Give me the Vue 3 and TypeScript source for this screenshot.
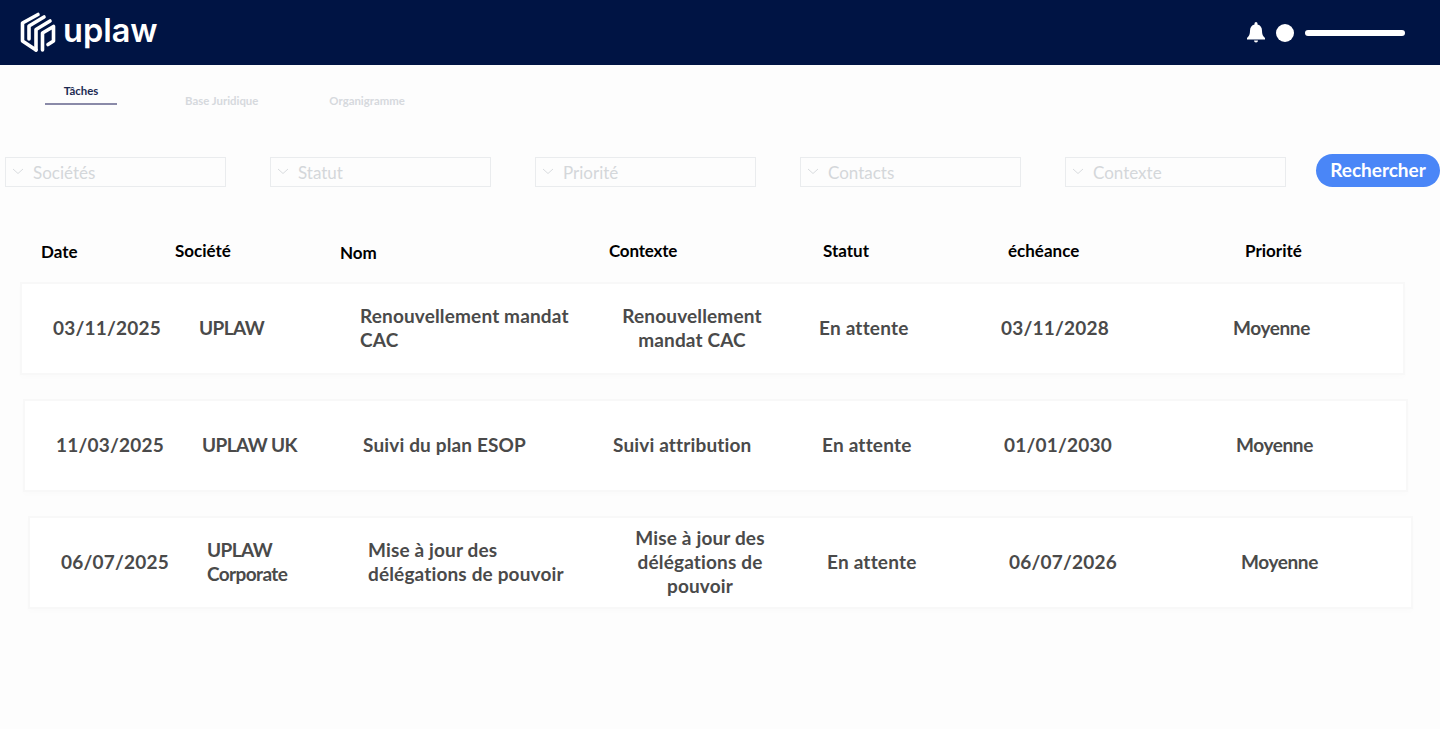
<script setup lang="ts">
interface Row {
  date: string
  company: string
  name: string
  context: string
  due: string
  rowClass: string
}

const tabs = [
  { label: 'Tâches', cls: 'tab-active' },
  { label: 'Base Juridique', cls: 'tab-legal' },
  { label: 'Organigramme', cls: 'tab-org' },
]

const filters = ['Sociétés', 'Statut', 'Priorité', 'Contacts', 'Contexte']

const headers = [
  { label: 'Date', cls: 'h-date' },
  { label: 'Société', cls: 'h-company' },
  { label: 'Nom', cls: 'h-name' },
  { label: 'Contexte', cls: 'h-context' },
  { label: 'Statut', cls: 'h-status' },
  { label: 'échéance', cls: 'h-due' },
  { label: 'Priorité', cls: 'h-priority' },
]

const rows: Row[] = [
  { date: '03/11/2025', company: 'UPLAW', name: 'Renouvellement mandat CAC', context: 'Renouvellement mandat CAC', due: '03/11/2028', rowClass: 'row-a' },
  { date: '11/03/2025', company: 'UPLAW UK', name: 'Suivi du plan ESOP', context: 'Suivi attribution', due: '01/01/2030', rowClass: 'row-b' },
  { date: '06/07/2025', company: 'UPLAW Corporate', name: 'Mise à jour des délégations de pouvoir', context: 'Mise à jour des délégations de pouvoir', due: '06/07/2026', rowClass: 'row-c' },
]
</script>

<template>
  <div class="page">
    <header class="topbar">
      <div class="brand">
        <svg class="mark" viewBox="0 0 36 41" width="36" height="41" fill="none" stroke="#fff" stroke-width="3.6" stroke-linejoin="round" stroke-linecap="round">
          <path d="M18 2.500 L2.500 11 V29 L16 38" />
          <path d="M24 5 L9 14 V27" />
          <path d="M30 9 L16 17.500 V38" />
          <path d="M22.500 38 V21 L33.500 14.500 V29 L28 32.500" />
        </svg>
        <span class="wordmark">uplaw</span>
      </div>
      <div class="account">
        <svg class="bell" viewBox="0 0 18 21" width="18" height="21" fill="#fff">
          <path d="M9 0a1.500 1.500 0 0 1 1.500 1.500v1c3 .7 4.500 3.200 4.500 6.200 0 3.400.8 5.300 3 7.300v1.500H0V16c2.200-2 3-3.900 3-7.300 0-3 1.500-5.500 4.500-6.200v-1A1.500 1.500 0 0 1 9 0z" />
          <path d="M7 18.500h4a2 2 0 0 1-4 0z" />
        </svg>
        <span class="avatar"></span>
        <span class="user-bar"></span>
      </div>
    </header>

    <nav class="tabs">
      <span v-for="t in tabs" :key="t.label" class="tab" :class="t.cls">{{ t.label }}</span>
    </nav>

    <section class="filters">
      <div v-for="f in filters" :key="f" class="select">
        <svg class="chev" viewBox="0 0 12 7" width="12" height="7" fill="none" stroke="#d9dcdf" stroke-width="1">
          <path d="M1 1l5 4.500L11 1" />
        </svg>
        <span>{{ f }}</span>
      </div>
      <button class="search" type="button">Rechercher</button>
    </section>

    <div class="thead">
      <span v-for="h in headers" :key="h.label" :class="h.cls">{{ h.label }}</span>
    </div>

    <div class="rows">
      <article v-for="r in rows" :key="r.date" class="row" :class="r.rowClass">
        <span class="num">{{ r.date }}</span>
        <span class="company">{{ r.company }}</span>
        <span class="name">{{ r.name }}</span>
        <span class="context">{{ r.context }}</span>
        <span class="status">En attente</span>
        <span class="num">{{ r.due }}</span>
        <span class="priority">Moyenne</span>
      </article>
    </div>
  </div>
</template>

<style scoped>
.page {
  width: 1440px;
  height: 729px;
  overflow: hidden;
  background: #fdfdfd;
  font-family: "Lato", "Noto Sans", sans-serif;
}
.topbar {
  height: 65px;
  background: #001444;
  display: flex;
  align-items: center;
  justify-content: space-between;
  padding: 0 35px 0 20px;
  box-sizing: border-box;
}
.brand { display: flex; align-items: center; gap: 7px; }
.wordmark {
  font-family: "Inter", sans-serif;
  font-size: 32.5px;
  font-weight: 600;
  line-height: 40px;
  color: #fff;
  margin-top: -3px;
}
.account { display: flex; align-items: center; }
.bell { margin-right: 11px; margin-top: -1px; }
.avatar { width: 18px; height: 18px; border-radius: 50%; background: #fff; margin-right: 11px; }
.user-bar { width: 100px; height: 6px; border-radius: 3px; background: #fff; }

.tabs { display: flex; height: 75px; padding-left: 45px; }
.tab { font-size: 11.4px; font-weight: 700; color: #d6d9dd; line-height: 14px; }
.tab-active {
  width: 72px;
  height: 19px;
  margin-top: 19px;
  text-align: center;
  color: #1c2a52;
  border-bottom: 2px solid #8a8aa8;
}
.tab-legal { margin: 29px 0 0 68px; }
.tab-org { margin: 29px 0 0 71px; }

.filters { height: 33px; padding-left: 5px; display: flex; gap: 44px; margin-top: 14px; }
.select {
  width: 221px;
  height: 30px;
  margin-top: 3px;
  box-sizing: border-box;
  border: 1px solid #eaecee;
  display: flex;
  align-items: center;
  padding-left: 6px;
  gap: 9px;
  font-size: 17px;
  color: #d4d7da;
}
.chev { margin-top: -2px; }
.search {
  width: 124px;
  height: 33px;
  margin-left: -14px;
  border: 0;
  border-radius: 17px;
  background: #4a86f7;
  color: #fff;
  font: 700 19px "Lato", sans-serif;
  padding: 0 0 2px;
}

.thead {
  height: 95px;
  display: grid;
  grid-template-columns: 134px 165px 269px 214px 185px 237px 1fr;
  padding-left: 41px;
  font-size: 17px;
  font-weight: 700;
  color: #000;
}
.thead span { margin-top: 53px; line-height: 22px; }
.thead .h-date { margin-top: 54px; }
.thead .h-name { margin-top: 55px; }
.thead .h-context { letter-spacing: -0.2px; }

.rows { display: flex; flex-direction: column; gap: 24px; }
.row {
  width: 1385px;
  height: 93px;
  box-sizing: border-box;
  background: #fff;
  border: 2px solid #f8f8f8;
  box-shadow: 0 3px 6px rgba(0, 0, 0, 0.012);
  display: grid;
  grid-template-columns: 146px 161px 250px 209px 182px 232px 1fr;
  align-items: center;
  padding: 0 0 2px 31px;
  font-size: 19px;
  font-weight: 700;
  line-height: 24px;
  color: #4a4a4a;
}
.row-a { margin-left: 20px; }
.row-b { margin-left: 23px; }
.row-c { margin-left: 28px; }
.company { max-width: 110px; letter-spacing: -0.6px; }
.name { max-width: 215px; letter-spacing: 0.15px; }
.context { width: 164px; text-align: center; letter-spacing: 0.15px; }
.row-b .context { text-align: left; }
.status { letter-spacing: 0.2px; }
.priority { letter-spacing: -0.4px; }
.num { letter-spacing: 0.2px; }
</style>
